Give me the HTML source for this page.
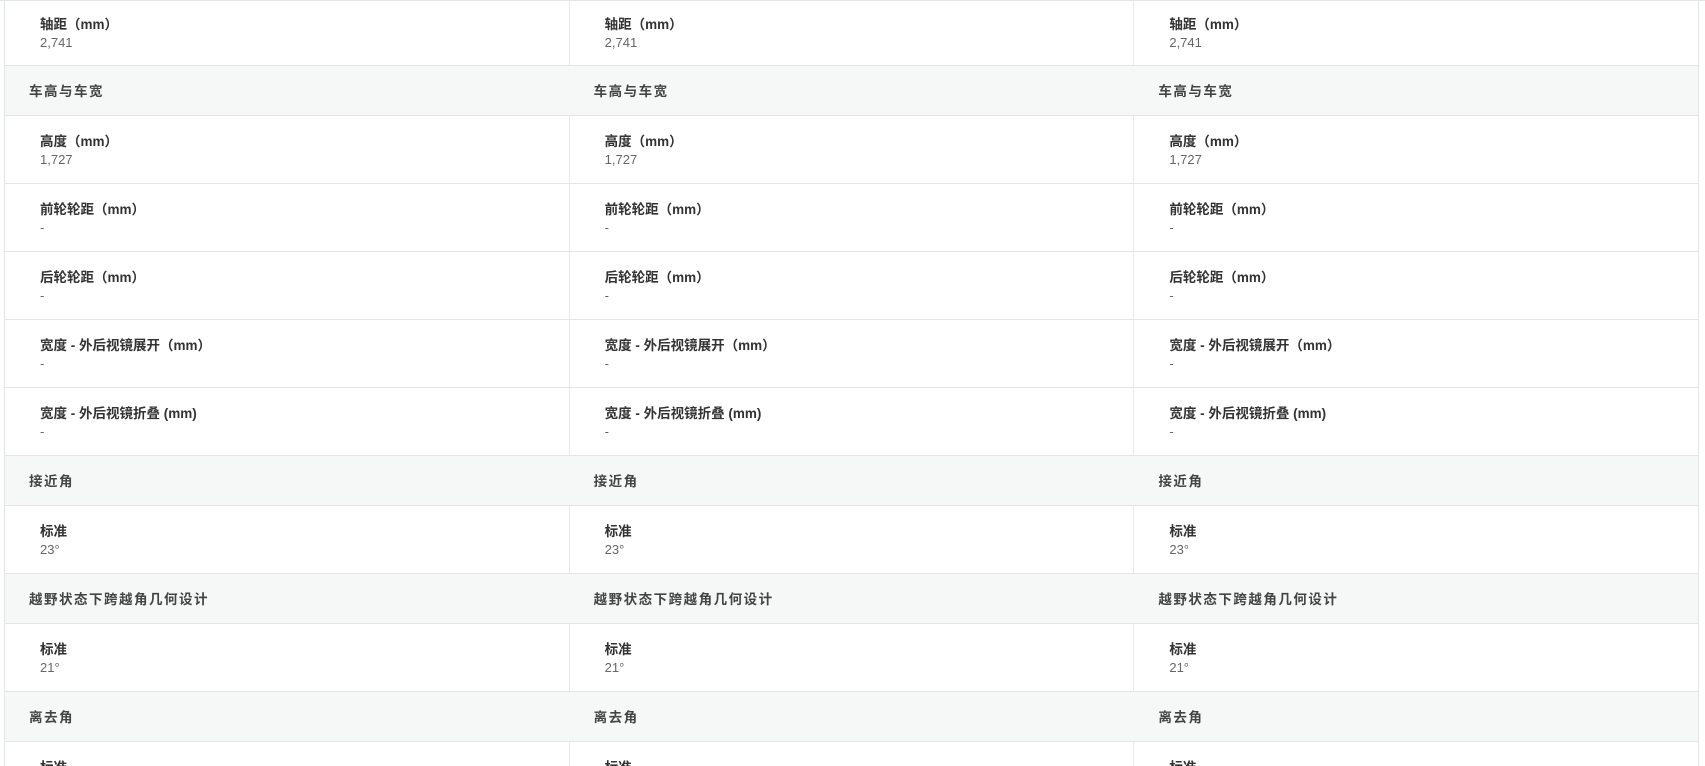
<!DOCTYPE html>
<html><head><meta charset="utf-8"><style>
*{margin:0;padding:0;box-sizing:border-box}
html,body{width:1705px;height:766px;overflow:hidden}
body{background:#fff;font-family:"Liberation Sans","Noto Sans CJK SC",sans-serif;position:relative}
.wrap{position:absolute;left:4px;top:0;width:1695px;border-left:1px solid #e3e6e6;border-right:1px solid #e3e6e6;height:766px;overflow:hidden}
.row{position:absolute;left:0;width:1694px;border-bottom:1px solid #e3e6e6;display:flex}
.h{background:#f6f8f8}
.h .c{width:565px;padding-left:24px;font-size:13.5px;letter-spacing:1.5px;font-weight:bold;color:#444;line-height:52px}
.d .c{width:565px;border-right:1px solid #e8eaea;padding-left:35px;padding-top:17px}
.d .c:last-child{border-right:none}
.l{font-size:13.5px;font-weight:bold;color:#333;line-height:18px}
.v{font-size:13px;color:#666;line-height:18px}
.top{position:absolute;left:0;top:0;width:1705px;height:1px;background:#e3e6e6}
</style></head><body>
<div class="wrap">
<div class="row d" style="top:-1px;height:67px"><div class="c"><div class="l">轴距（mm）</div><div class="v">2,741</div></div><div class="c"><div class="l">轴距（mm）</div><div class="v">2,741</div></div><div class="c"><div class="l">轴距（mm）</div><div class="v">2,741</div></div></div>
<div class="row h" style="top:66px;height:50px"><div class="c">车高与车宽</div><div class="c">车高与车宽</div><div class="c">车高与车宽</div></div>
<div class="row d" style="top:116px;height:68px"><div class="c"><div class="l">高度（mm）</div><div class="v">1,727</div></div><div class="c"><div class="l">高度（mm）</div><div class="v">1,727</div></div><div class="c"><div class="l">高度（mm）</div><div class="v">1,727</div></div></div>
<div class="row d" style="top:184px;height:68px"><div class="c"><div class="l">前轮轮距（mm）</div><div class="v">-</div></div><div class="c"><div class="l">前轮轮距（mm）</div><div class="v">-</div></div><div class="c"><div class="l">前轮轮距（mm）</div><div class="v">-</div></div></div>
<div class="row d" style="top:252px;height:68px"><div class="c"><div class="l">后轮轮距（mm）</div><div class="v">-</div></div><div class="c"><div class="l">后轮轮距（mm）</div><div class="v">-</div></div><div class="c"><div class="l">后轮轮距（mm）</div><div class="v">-</div></div></div>
<div class="row d" style="top:320px;height:68px"><div class="c"><div class="l">宽度 - 外后视镜展开（mm）</div><div class="v">-</div></div><div class="c"><div class="l">宽度 - 外后视镜展开（mm）</div><div class="v">-</div></div><div class="c"><div class="l">宽度 - 外后视镜展开（mm）</div><div class="v">-</div></div></div>
<div class="row d" style="top:388px;height:68px"><div class="c"><div class="l">宽度 - 外后视镜折叠 (mm)</div><div class="v">-</div></div><div class="c"><div class="l">宽度 - 外后视镜折叠 (mm)</div><div class="v">-</div></div><div class="c"><div class="l">宽度 - 外后视镜折叠 (mm)</div><div class="v">-</div></div></div>
<div class="row h" style="top:456px;height:50px"><div class="c">接近角</div><div class="c">接近角</div><div class="c">接近角</div></div>
<div class="row d" style="top:506px;height:68px"><div class="c"><div class="l">标准</div><div class="v">23°</div></div><div class="c"><div class="l">标准</div><div class="v">23°</div></div><div class="c"><div class="l">标准</div><div class="v">23°</div></div></div>
<div class="row h" style="top:574px;height:50px"><div class="c">越野状态下跨越角几何设计</div><div class="c">越野状态下跨越角几何设计</div><div class="c">越野状态下跨越角几何设计</div></div>
<div class="row d" style="top:624px;height:68px"><div class="c"><div class="l">标准</div><div class="v">21°</div></div><div class="c"><div class="l">标准</div><div class="v">21°</div></div><div class="c"><div class="l">标准</div><div class="v">21°</div></div></div>
<div class="row h" style="top:692px;height:50px"><div class="c">离去角</div><div class="c">离去角</div><div class="c">离去角</div></div>
<div class="row d" style="top:742px;height:24px;border-bottom:none;overflow:hidden"><div class="c"><div class="l">标准</div></div><div class="c"><div class="l">标准</div></div><div class="c"><div class="l">标准</div></div></div>
</div>
<div class="top"></div>
</body></html>
